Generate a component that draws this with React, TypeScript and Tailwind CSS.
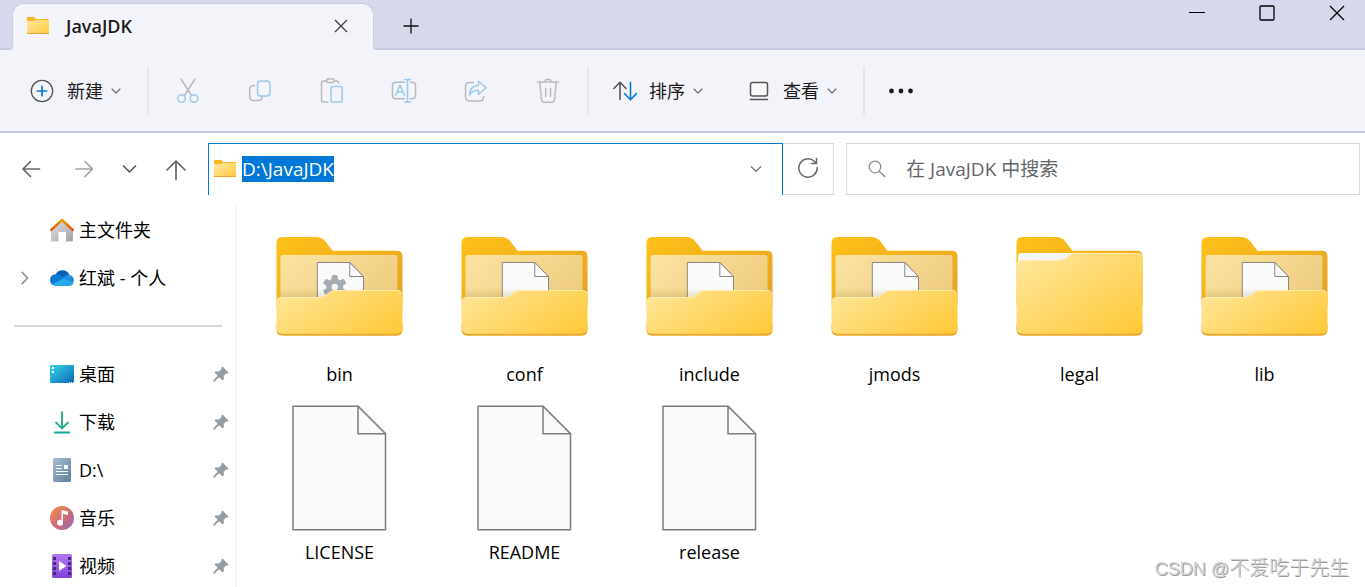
import type { ReactNode } from "react";

type IconProps = { className?: string };

const stroke = { fill: "none", strokeLinecap: "round", strokeLinejoin: "round" } as const;
const GREY = "#b9babf";
const SKY = "#9ccaee";

function SmallFolder({ className = "" }: IconProps) {
  return (
    <svg width="24" height="20" viewBox="0 0 24 20" className={className} aria-hidden="true">
      <defs>
        <linearGradient id="sf" x1="0" y1="0" x2="1" y2="1">
          <stop offset="0" stopColor="#ffe8a3" />
          <stop offset="1" stopColor="#ffcb3d" />
        </linearGradient>
      </defs>
      <path d="M1 2.2Q1 1 2.2 1H8l2 2h12q1 0 1 1v3H1z" fill="#f8b51e" />
      <path d="M1 4.8h7.5L10 4h13v13.5H1z" fill="url(#sf)" />
      <path d="M1 17h22v.6q0 .4-.6.4H1.6Q1 18 1 17.6z" fill="#e5a42c" />
    </svg>
  );
}

function Chevron({ size = 10, color = "#6b6b6f", width = 1.1 }: { size?: number; color?: string; width?: number }) {
  return (
    <svg width={size} height={size} viewBox="0 0 10 10" {...stroke} stroke={color} strokeWidth={width} aria-hidden="true">
      <path d="M1 3l4 4 4-4" />
    </svg>
  );
}

function CutIcon() {
  return (
    <svg width="24" height="26" viewBox="0 0 24 26" {...stroke} strokeWidth="1.5" aria-hidden="true">
      <path d="M5 1l10.5 16.5M19 1L8.5 17.5" stroke={GREY} />
      <circle cx="5.5" cy="20.5" r="3.8" stroke={SKY} />
      <circle cx="18" cy="20.5" r="3.8" stroke={SKY} />
    </svg>
  );
}

function CopyIcon() {
  return (
    <svg width="24" height="26" viewBox="0 0 24 26" {...stroke} strokeWidth="1.5" aria-hidden="true">
      <path d="M6.5 7.500Q1.700 7.500 1.700 11.500v7q0 4 4 4h4.500q3.800 0 4-3.500" stroke={GREY} />
      <rect x="9.5" y="3" width="12.5" height="15" rx="3.2" stroke={SKY} />
    </svg>
  );
}

function PasteIcon() {
  return (
    <svg width="24" height="26" viewBox="0 0 24 26" {...stroke} strokeWidth="1.5" aria-hidden="true">
      <path d="M6.5 3H3.500Q1.500 3 1.500 5v16.500q0 2.500 2 2.500h4.500M14.500 3h2.500q1.500 0 1.500 2" stroke={GREY} />
      <rect x="6.5" y="1" width="8" height="3.5" rx="1.7" stroke={GREY} />
      <rect x="11" y="8.5" width="11.2" height="15.5" rx="1.8" stroke={SKY} />
    </svg>
  );
}

function RenameIcon() {
  return (
    <svg width="26" height="26" viewBox="0 0 26 26" {...stroke} strokeWidth="1.5" aria-hidden="true">
      <path d="M13.500 4.200H5q-3.500 0-3.500 3.500v9.500Q1.500 20.800 5 20.800h8.500M19.500 4.200h1.500q3.500 0 3.500 3.500v9.500q0 3.600-3.500 3.600h-1.500" stroke={GREY} />
      <path d="M4.800 17L9 7l4.200 10M6.200 14h5.600" stroke={SKY} strokeWidth="1.6" />
      <path d="M13.500 1.500h6M13.500 24h6M16.500 1.500V24" stroke={SKY} strokeWidth="1.6" />
    </svg>
  );
}

function ShareIcon() {
  return (
    <svg width="24" height="26" viewBox="0 0 24 26" {...stroke} strokeWidth="1.5" aria-hidden="true">
      <path d="M9.500 4.500H5.500q-4 0-4 4V19q0 4 4 4h10q4 0 4-3.500v-1" stroke={GREY} />
      <path d="M14.500 3.200l7.800 6.600-7.800 6.700v-4Q8.500 12 5.300 17 6 8 14.500 7.200z" stroke={SKY} />
    </svg>
  );
}

function TrashIcon() {
  return (
    <svg width="24" height="26" viewBox="0 0 24 26" {...stroke} strokeWidth="1.5" stroke={GREY} aria-hidden="true">
      <path d="M1.500 4h21M8.800 4Q9 1.200 12 1.200T15.200 4M3.800 4l1.700 17.500q.3 2.800 2.800 2.800h7.400q2.500 0 2.800-2.800L20.200 4M9.700 10.500v8M14.500 10.500v8" />
    </svg>
  );
}

function Gear() {
  return (
    <g>
      <g fill="#a3abb4">
        <rect x="55.7" y="49" width="6" height="24" rx="1.5" />
        <rect x="55.7" y="49" width="6" height="24" rx="1.5" transform="rotate(60 58.7 61)" />
        <rect x="55.7" y="49" width="6" height="24" rx="1.5" transform="rotate(120 58.7 61)" />
        <circle cx="58.7" cy="61" r="8.5" />
      </g>
      <circle cx="58.7" cy="61" r="3.2" fill="#f7f7f7" />
    </g>
  );
}

function FolderIcon({ kind }: { kind: "gear" | "page" | "plain" }) {
  return (
    <svg width="128" height="128" viewBox="0 0 128 128" aria-hidden="true">
      <defs>
        <linearGradient id="fb" x1="0" y1="0" x2="1" y2="1">
          <stop offset="0" stopColor="#ffc118" />
          <stop offset="1" stopColor="#e3a024" />
        </linearGradient>
        <linearGradient id="fp" x1="0" y1="0" x2="1" y2="0.5">
          <stop offset="0" stopColor="#fbe3a3" />
          <stop offset="1" stopColor="#efcd80" />
        </linearGradient>
        <linearGradient id="ff" x1="30" y1="50" x2="85" y2="135" gradientUnits="userSpaceOnUse">
          <stop offset="0" stopColor="#ffe596" />
          <stop offset="1" stopColor="#ffc835" />
        </linearGradient>
        <linearGradient id="fl" x1="0" y1="0" x2="1" y2="1">
          <stop offset="0" stopColor="#ffe8a0" />
          <stop offset="1" stopColor="#ffc835" />
        </linearGradient>
        <linearGradient id="fs" x1="0" y1="0" x2="0" y2="1">
          <stop offset="0" stopColor="#8a6a20" stopOpacity="0" />
          <stop offset="1" stopColor="#8a6a20" stopOpacity="0.2" />
        </linearGradient>
      </defs>
      <path d="M.5 17q0-6 6-6h33.500q6 0 9.500 4.500l7 9.200H121q5.500 0 5.500 6V80H.5z" fill="url(#fb)" />
      <path d="M.5 98h126v6q0 5.700-6 5.700h-114q-6 0-6-5.700z" fill="#e8a82c" />
      {kind === "plain" ? (
        <>
          <path d="M2 40V30q0-3 3-3h55v13z" fill="#f4f4f5" />
          <path d="M.5 39.700q0-5.700 6-5.700H43q5 0 8-3 4-4 8-4h62q5.500 0 5.500 5.700V102q0 5.700-6 5.700h-114q-6 0-6-5.700z" fill="url(#fl)" />
          <path d="M1 37q1-2.500 5-2.500h37q5 0 8-3 4-4 8-4h62q4 0 5 3" fill="none" stroke="#fff2c4" strokeWidth="1" opacity="0.7" />
        </>
      ) : (
        <>
          <rect x="4.5" y="29" width="117" height="60" rx="2.5" fill="url(#fp)" />
          <path d="M41.300 80V36.500h32.500L87.500 50.500V80z" fill="#fafafa" stroke="#8b8681" strokeWidth="1" />
          {kind === "gear" && <Gear />}
          <path d="M73.800 36.500v14h13.700z" fill="#fafafa" stroke="#8b8681" strokeWidth="1" strokeLinejoin="round" />
          <path d="M4.500 62h117v10h-117z" fill="url(#fs)" />
          <path d="M.5 76.700Q.5 71 6.500 71H43q5 0 8-3 4-4 8-4h62q5.500 0 5.500 5.700V102q0 5.700-6 5.700h-114q-6 0-6-5.700z" fill="url(#ff)" />
          <path d="M1 74q1-2.500 5-2.500h37q5 0 8-3 4-4 8-4h62q4 0 5 3" fill="none" stroke="#fff2c4" strokeWidth="1" opacity="0.7" />
        </>
      )}
    </svg>
  );
}

function FileIcon() {
  return (
    <svg width="128" height="128" viewBox="0 0 128 128" aria-hidden="true">
      <g fill="#fafafa" stroke="#7c7c78" strokeWidth="1.5" strokeLinejoin="round">
        <path d="M17 2.200h65l27.500 27.500v96H17z" />
        <path d="M82 2.200v27.500h27.500z" />
      </g>
    </svg>
  );
}

function HomeIcon() {
  return (
    <svg width="24" height="24" viewBox="0 0 24 24" aria-hidden="true">
      <defs>
        <linearGradient id="hw" x1="0" y1="0" x2="1" y2="1">
          <stop offset="0" stopColor="#e4e4e4" />
          <stop offset="1" stopColor="#a2a2a2" />
        </linearGradient>
        <linearGradient id="hr" x1="0" y1="0" x2="0" y2="1">
          <stop offset="0" stopColor="#f6960c" />
          <stop offset="1" stopColor="#dc5a14" />
        </linearGradient>
      </defs>
      <path d="M1 11.500L12 1.500l11 10V22q0 1.500-1.500 1.500H16V14H8.500v9.500H2.500Q1 23.500 1 22z" fill="url(#hw)" />
      <path d="M1.200 12L12 2l10.800 10" fill="none" stroke="url(#hr)" strokeWidth="2.4" strokeLinecap="round" strokeLinejoin="round" />
    </svg>
  );
}

function CloudIcon() {
  return (
    <svg width="24" height="24" viewBox="0 0 24 24" aria-hidden="true">
      <path d="M5.500 8.500Q8 4.300 12.500 4.300q5 0 7 5L12 14z" fill="#0b5fb8" />
      <path d="M5.500 8.300q3-.3 5 1.200L16 13 3 19Q0 17.500 0 14q0-5 5.500-5.700z" fill="#1079d4" />
      <path d="M13.500 11.300q3-3 6-2.300Q24 10 24 15l-2 2.500-9-5z" fill="#1a90e0" />
      <path d="M2.300 18.500L14 12.300l9.700 4.400Q22.500 20 19 20H6q-2.200 0-3.700-1.500z" fill="#28a8ea" />
    </svg>
  );
}

function DesktopIcon() {
  return (
    <svg width="24" height="24" viewBox="0 0 24 24" aria-hidden="true">
      <defs>
        <linearGradient id="dk" x1="0" y1="0" x2="1" y2="1">
          <stop offset="0" stopColor="#36d6e4" />
          <stop offset="1" stopColor="#0d66b8" />
        </linearGradient>
      </defs>
      <rect x="0" y="3" width="24" height="18" rx="1" fill="url(#dk)" />
      <path d="M2 5h2v2H2zM2 9h2v2H2z" fill="#fff" />
      <path d="M19 20.500h1M21 20.500h1M23 20.500h1" stroke="#fff" strokeWidth="1" />
    </svg>
  );
}

function DownloadIcon() {
  return (
    <svg width="24" height="24" viewBox="0 0 24 24" aria-hidden="true">
      <path d="M12 1.500V18M5.500 12l6.500 6.500 6.500-6.500" fill="none" stroke="#22b08f" strokeWidth="1.9" />
      <path d="M4 22.500h16" stroke="#14a596" strokeWidth="2" />
    </svg>
  );
}

function DriveIcon() {
  return (
    <svg width="24" height="24" viewBox="0 0 24 24" aria-hidden="true">
      <defs>
        <linearGradient id="dr" x1="0" y1="0" x2="1" y2="1">
          <stop offset="0" stopColor="#a9bdd2" />
          <stop offset="1" stopColor="#5d7f9f" />
        </linearGradient>
      </defs>
      <rect x="3" y="0" width="18" height="24" rx="1.5" fill="url(#dr)" />
      <path d="M6 7.500h6M6 10.500h6M6 13.500h12M6 16.500h12" stroke="#fff" strokeWidth="1.1" />
      <rect x="14" y="7" width="4" height="4" fill="#fff" />
    </svg>
  );
}

function MusicIcon() {
  return (
    <svg width="24" height="24" viewBox="0 0 24 24" aria-hidden="true">
      <defs>
        <linearGradient id="mu" x1="0.1" y1="0.1" x2="0.9" y2="0.9">
          <stop offset="0" stopColor="#f08c52" />
          <stop offset="0.55" stopColor="#cd6c78" />
          <stop offset="1" stopColor="#a266ae" />
        </linearGradient>
      </defs>
      <circle cx="12" cy="12" r="12" fill="url(#mu)" />
      <circle cx="10" cy="16.8" r="3" fill="#fff" />
      <path d="M11.500 17V4.500l1.500-.3q2 1 5 1.300v3.500q-3-.2-5-1.500V17z" fill="#fff" />
    </svg>
  );
}

function VideoIcon() {
  return (
    <svg width="24" height="24" viewBox="0 0 24 24" aria-hidden="true">
      <defs>
        <linearGradient id="vi" x1="0" y1="0" x2="0" y2="1">
          <stop offset="0" stopColor="#b277ef" />
          <stop offset="1" stopColor="#8243dd" />
        </linearGradient>
      </defs>
      <rect x="2" y="0" width="20" height="24" rx="1.5" fill="url(#vi)" />
      <path d="M4.500 3v19M19.500 3v19" stroke="#452a72" strokeWidth="3" strokeDasharray="3 2" />
      <path d="M9 7v10l7.500-5z" fill="#fff" />
    </svg>
  );
}

function PinIcon() {
  return (
    <svg width="16" height="16" viewBox="0 0 16 16" aria-hidden="true">
      <path d="M9.500.5l6 6-1.200 1.300-1.300-.2-2.300 2.400.2 3.200L9.500 14.500 6.300 11.300 1.500 15.500 0 15.800.5 14.300 4.600 9.700 1.500 6.500 2.800 5.200 6 5.400 8.400 3 8.200 1.800z" fill="#929ca2" />
    </svg>
  );
}

function ToolIcon({ label, children }: { label: string; children: ReactNode }) {
  return (
    <button type="button" aria-label={label} disabled className="flex h-12 w-18 shrink-0 items-center justify-center">
      {children}
    </button>
  );
}

function Divider() {
  return <span className="h-12 w-0.5 shrink-0 bg-[#e5e6eb]" />;
}

const pinned = [
  { name: "桌面", icon: <DesktopIcon /> },
  { name: "下载", icon: <DownloadIcon /> },
  { name: "D:\\", icon: <DriveIcon /> },
  { name: "音乐", icon: <MusicIcon /> },
  { name: "视频", icon: <VideoIcon /> },
];

const entries = [
  { name: "bin", icon: <FolderIcon kind="gear" /> },
  { name: "conf", icon: <FolderIcon kind="page" /> },
  { name: "include", icon: <FolderIcon kind="page" /> },
  { name: "jmods", icon: <FolderIcon kind="page" /> },
  { name: "legal", icon: <FolderIcon kind="plain" /> },
  { name: "lib", icon: <FolderIcon kind="page" /> },
  { name: "LICENSE", icon: <FileIcon /> },
  { name: "README", icon: <FileIcon /> },
  { name: "release", icon: <FileIcon /> },
];

function TitleBar() {
  return (
    <header className="flex h-[50px] shrink-0 border-b-2 border-[#c6cbe1] bg-[#d6d9ec] pl-3">
      <div className="relative z-10 mt-[3px] flex h-[47px] w-[362px] shrink-0 items-center rounded-t-xl border-x border-t border-[#c9cde2] bg-[#f3f4fa] pr-6 pb-0.5 pl-[13px]">
        <svg width="4" height="4" viewBox="0 0 4 4" className="absolute bottom-0 -left-1" aria-hidden="true">
          <path d="M4 0Q4 4 0 4h5V0z" fill="#f3f4fa" />
          <path d="M3.500 0Q3.500 3.500 0 3.500" fill="none" stroke="#c9cde2" />
        </svg>
        <svg width="4" height="4" viewBox="0 0 4 4" className="absolute -right-1 bottom-0" aria-hidden="true">
          <path d="M0 0Q0 4 4 4H-1V0z" fill="#f3f4fa" />
          <path d="M.5 0Q.5 3.500 4 3.500" fill="none" stroke="#c9cde2" />
        </svg>
        <SmallFolder />
        <span className="ml-4 grow text-lg leading-6 font-semibold text-[#1b1b1b]">JavaJDK</span>
        <button type="button" aria-label="关闭标签页" className="flex size-4 items-center justify-center">
          <svg width="14" height="14" viewBox="0 0 14 14" stroke="#3a3a3d" strokeWidth="1.2" aria-hidden="true">
            <path d="M1 1l12 12M13 1L1 13" />
          </svg>
        </button>
      </div>
      <button type="button" aria-label="新建标签页" className="ml-[27px] flex h-12 w-5 items-center justify-center pt-1">
        <svg width="16" height="16" viewBox="0 0 16 16" stroke="#111" strokeWidth="1.3" aria-hidden="true">
          <path d="M8 .5v15M.5 8h15" />
        </svg>
      </button>
      <div className="ml-auto flex h-[26px] items-center gap-[54px] pr-5">
        <button type="button" aria-label="最小化">
          <svg width="16" height="16" viewBox="0 0 16 16" stroke="#000" aria-hidden="true">
            <path d="M0 7.500h16" />
          </svg>
        </button>
        <button type="button" aria-label="最大化">
          <svg width="16" height="16" viewBox="0 0 16 16" fill="none" stroke="#000" strokeWidth="1.3" aria-hidden="true">
            <rect x="1" y="1" width="14" height="14" rx="1" />
          </svg>
        </button>
        <button type="button" aria-label="关闭">
          <svg width="16" height="16" viewBox="0 0 16 16" stroke="#000" strokeWidth="1.3" aria-hidden="true">
            <path d="M1 1l14 14M15 1L1 15" />
          </svg>
        </button>
      </div>
    </header>
  );
}

function Toolbar() {
  return (
    <div role="toolbar" className="flex h-[83px] shrink-0 items-center border-b-2 border-[#c2c8dd] bg-[#f3f4fa] pl-[30px] text-lg leading-6 text-[#1b1b1b]">
      <button type="button" className="flex w-[117px] shrink-0 items-center">
        <svg width="24" height="24" viewBox="0 0 24 24" {...stroke} aria-hidden="true">
          <circle cx="12" cy="12" r="10.7" stroke="#55565a" strokeWidth="1.3" />
          <path d="M12 7.300v9.400M7.300 12h9.400" stroke="#0a78d4" strokeWidth="1.7" />
        </svg>
        <span className="mr-2 ml-[13px]">新建</span>
        <Chevron />
      </button>
      <Divider />
      <div className="flex px-[3px]">
        <ToolIcon label="剪切"><CutIcon /></ToolIcon>
        <ToolIcon label="复制"><CopyIcon /></ToolIcon>
        <ToolIcon label="粘贴"><PasteIcon /></ToolIcon>
        <ToolIcon label="重命名"><RenameIcon /></ToolIcon>
        <ToolIcon label="共享"><ShareIcon /></ToolIcon>
        <ToolIcon label="删除"><TrashIcon /></ToolIcon>
      </div>
      <Divider />
      <button type="button" className="ml-6 flex w-[136px] shrink-0 items-center">
        <svg width="24" height="20" viewBox="0 0 24 20" {...stroke} strokeWidth="1.6" aria-hidden="true">
          <path d="M7 18.500V1.500M.8 7.500L7 1.300l6 6.200" stroke="#55565a" />
          <path d="M17.500 1.500v17M11.500 12.500l6 6.200 6-6.200" stroke="#0a78d4" />
        </svg>
        <span className="mr-2 ml-3">排序</span>
        <Chevron />
      </button>
      <button type="button" className="flex w-[114px] shrink-0 items-center">
        <svg width="20" height="20" viewBox="0 0 20 20" {...stroke} stroke="#55565a" strokeWidth="1.5" aria-hidden="true">
          <rect x="1.5" y="1.5" width="17" height="13.5" rx="2" fill="#fafafa" />
          <path d="M1.500 18.500h17" />
        </svg>
        <span className="mr-2 ml-3.5">查看</span>
        <Chevron />
      </button>
      <Divider />
      <button type="button" aria-label="更多" className="ml-6">
        <svg width="24" height="6" viewBox="0 0 24 6" fill="#1b1b1b" aria-hidden="true">
          <circle cx="2.5" cy="3" r="2.4" />
          <circle cx="12" cy="3" r="2.4" />
          <circle cx="21.5" cy="3" r="2.4" />
        </svg>
      </button>
    </div>
  );
}

function NavRow() {
  return (
    <div className="flex h-[73px] shrink-0 items-start pt-2.5 pr-[5px] pl-[21px]">
      <nav className="flex h-[52px] w-[187px] shrink-0 items-center">
        <button type="button" aria-label="后退">
          <svg width="20" height="20" viewBox="0 0 20 20" {...stroke} stroke="#66666a" strokeWidth="1.7" aria-hidden="true">
            <path d="M18.500 10h-16M9.500 2.500L2 10l7.500 7.500" />
          </svg>
        </button>
        <button type="button" aria-label="前进" className="ml-8">
          <svg width="20" height="20" viewBox="0 0 20 20" {...stroke} stroke="#a3a3a6" strokeWidth="1.7" aria-hidden="true">
            <path d="M3 10h16M12 2.500l7.500 7.500-7.500 7.500" />
          </svg>
        </button>
        <button type="button" aria-label="最近浏览的位置" className="ml-7">
          <svg width="16" height="16" viewBox="0 0 16 16" {...stroke} stroke="#5c5c60" strokeWidth="1.7" aria-hidden="true">
            <path d="M2.500 5L8.500 11l6-6" />
          </svg>
        </button>
        <button type="button" aria-label="向上" className="ml-7 pt-0.5">
          <svg width="22" height="22" viewBox="0 0 22 22" {...stroke} stroke="#66666a" strokeWidth="1.7" aria-hidden="true">
            <path d="M11 20.500v-18M2 11l9-9 9 9" />
          </svg>
        </button>
      </nav>
      <div className="flex h-[52px] grow-[575] basis-0 items-center border-x border-t border-[#0078d4] pr-5 pb-0.5 pl-1">
        <label htmlFor="address">
          <SmallFolder />
        </label>
        <input
          id="address"
          aria-label="地址"
          defaultValue="D:\JavaJDK"
          className="ml-[5px] field-sizing-content h-[26px] bg-[#0078d7] text-[19px] leading-[26px] text-white outline-none"
        />
        <button type="button" aria-label="历史地址" className="ml-auto">
          <Chevron size={12} />
        </button>
      </div>
      <button type="button" aria-label="刷新" className="flex h-[52px] w-[51px] shrink-0 items-center justify-center border-y border-r border-[#d9d9d9] pb-0.5">
        <svg width="22" height="22" viewBox="0 0 22 22" {...stroke} stroke="#66666a" strokeWidth="1.5" aria-hidden="true">
          <path d="M20.200 10.500A9.200 9.200 0 1 1 17.500 4.500l2 2M19.500 1.500v5h-5" />
        </svg>
      </button>
      <div className="ml-3 flex h-[52px] grow-[514] basis-0 items-center border border-[#d9d9d9] pl-[21px]">
        <label htmlFor="search">
          <svg width="18" height="18" viewBox="0 0 18 18" {...stroke} stroke="#8a8a90" strokeWidth="1.3" aria-hidden="true">
            <circle cx="7" cy="7" r="5.8" />
            <path d="M11.200 11.200l5.500 5.300" />
          </svg>
        </label>
        <input
          id="search"
          type="search"
          aria-label="搜索"
          placeholder="在 JavaJDK 中搜索"
          className="ml-5 h-8 min-w-0 grow bg-transparent text-[19px] leading-8 outline-none placeholder:text-[#66666a]"
        />
      </div>
    </div>
  );
}

function Sidebar() {
  return (
    <aside className="w-[237px] shrink-0 border-r-2 border-[#f5f5f5]">
      <ul>
        <li className="flex h-12 items-center gap-[5px] pl-[50px]">
          <HomeIcon />
          <a href="#home">主文件夹</a>
        </li>
        <li className="flex h-12 items-center gap-[5px] pl-[18px]">
          <button type="button" aria-label="展开" className="mr-[13px] -rotate-90">
            <Chevron size={14} color="#8c8c8c" width={1.1} />
          </button>
          <CloudIcon />
          <a href="#onedrive">红斌 - 个人</a>
        </li>
      </ul>
      <div className="flex h-12 items-center pr-[13px] pl-[14px]">
        <hr className="grow border-t-2 border-[#d5d5d5]" />
      </div>
      <ul>
        {pinned.map((item) => (
          <li key={item.name} className="flex h-12 items-center gap-[5px] pr-1.5 pl-[50px]">
            {item.icon}
            <a href="#pinned" className="grow">{item.name}</a>
            <PinIcon />
          </li>
        ))}
      </ul>
    </aside>
  );
}

export default function App() {
  return (
    <div className="relative flex h-screen flex-col overflow-hidden bg-white font-['Open_Sans','Noto_Sans_CJK_SC',sans-serif] text-lg leading-6 text-black">
      <TitleBar />
      <Toolbar />
      <NavRow />
      <div className="flex min-h-0 grow">
        <Sidebar />
        <main className="grow pt-5 pl-2.5">
          <ul className="grid grid-cols-[repeat(auto-fill,185px)] gap-y-[18px]">
            {entries.map((entry) => (
              <li key={entry.name} className="flex flex-col items-center gap-2">
                {entry.icon}
                <span>{entry.name}</span>
              </li>
            ))}
          </ul>
        </main>
      </div>
      <p className="absolute right-4 bottom-1 font-['Liberation_Sans','Noto_Sans_CJK_SC',sans-serif] text-xl leading-7 font-light text-[#d2d2d2] [text-shadow:1px_1px_0_#9a9a9a]">
        <span className="text-lg">CSDN @</span>不爱吃于先生
      </p>
    </div>
  );
}
